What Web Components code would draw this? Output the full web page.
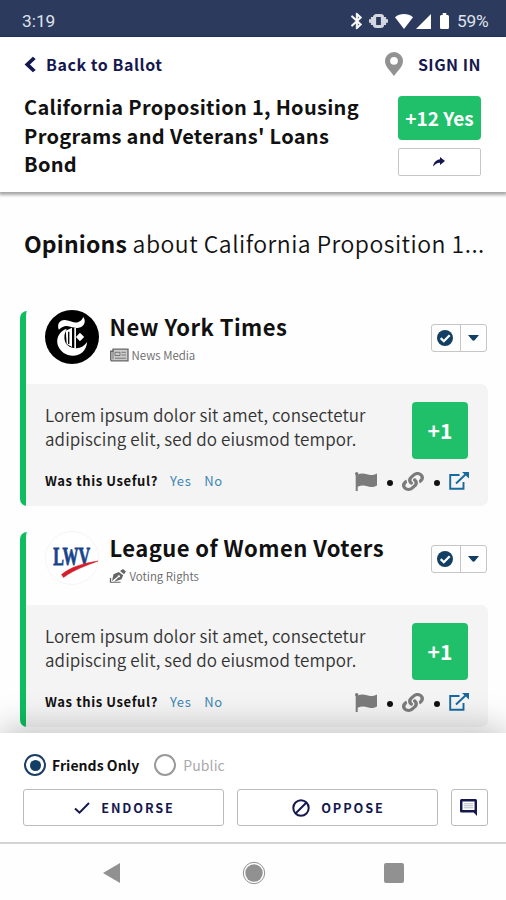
<!DOCTYPE html>
<html lang="en">
<head>
<meta charset="utf-8">
<meta name="viewport" content="width=device-width, initial-scale=1">
<title>Opinions</title>
<style>
  html, body {
    margin: 0;
    height: 100%;
    overflow: hidden;
  }

  body {
    font-family: "Noto Sans CJK SC", "Noto Sans", sans-serif;
    color: #111;
    background: #fefefe;
    --navy: #15184f;
    --blue: #123f63;
    --green: #20c06a;
    --line: #c6c6c6;
    --gray: #7b7b7b;
  }
</style>
</head>
<body>
<ballot-app>
  <status-bar slot="status" time="3:19" battery="59%"></status-bar>
  <ballot-header slot="header" score="+12 Yes">
    <span slot="back">Back to Ballot</span>
    <span slot="account">SIGN IN</span>
    California Proposition 1, Housing Programs and Veterans' Loans Bond
  </ballot-header>

  <opinions-heading><b>Opinions</b> about California Proposition 1...</opinions-heading>

  <opinion-card score="+1" icon="newspaper" style="--icon-w: 19px; --tag-gap: 3px">
    <app-icon slot="avatar" name="times"></app-icon>
    <span slot="name">New York Times</span>
    <span slot="category">News Media</span>
    Lorem ipsum dolor sit amet, consectetur adipiscing elit, sed do eiusmod tempor.
  </opinion-card>

  <opinion-card score="+1" icon="pen" style="--icon-w: 16px; --tag-gap: 4px">
    <app-icon slot="avatar" name="lwv"></app-icon>
    <span slot="name">League of Women Voters</span>
    <span slot="category">Voting Rights</span>
    Lorem ipsum dolor sit amet, consectetur adipiscing elit, sed do eiusmod tempor.
  </opinion-card>

  <vote-panel slot="footer"></vote-panel>
  <nav-bar slot="footer"></nav-bar>
</ballot-app>

<script>
const ICONS = {
  bluetooth: ['5 2 14 20', '<path d="M17.71 7.71 12 2h-1v7.59L6.41 5 5 6.41 10.59 12 5 17.59 6.41 19 11 14.41V22h1l5.71-5.71-4.3-4.29 4.3-4.29zM13 5.83l1.88 1.88L13 9.59V5.83zm1.88 10.46L13 18.17v-3.76l1.88 1.88z" stroke="currentColor" stroke-width=".6"/>'],
  vibrate: ['0 0 20 16', '<rect x="5.8" y="1.8" width="8.4" height="12.4" rx="2" fill="none" stroke="currentColor" stroke-width="3.4"/><path d="M0 6h2v4H0zM2 3.500h2.500v9H2zM15.500 3.500H18v9h-2.500zM18 6h2v4h-2z"/>'],
  wifi: ['0 0 20 16', '<path d="M10 16 0 3.500C5.500-1.200 14.500-1.200 20 3.500z"/>'],
  signal: ['0 0 16 16', '<path d="M16 0v16H0z"/>'],
  battery: ['0 0 10 16', '<path d="M3 0h4v2h1.500Q10 2 10 3.500v11Q10 16 8.500 16h-7Q0 16 0 14.500v-11Q0 2 1.500 2H3z"/>'],
  back: ['0 0 12 18', '<path d="M9.500 2 3 9l6.500 7" fill="none" stroke="currentColor" stroke-width="3.600"/>'],
  pin: ['0 0 18 24', '<path fill-rule="evenodd" d="M9 0a9 9 0 0 1 9 9c0 5.500-5 9.500-9 15C5 18.500 0 14.500 0 9a9 9 0 0 1 9-9zm0 4.900a3.900 3.900 0 1 0 0 7.800 3.900 3.900 0 0 0 0-7.800z"/>'],
  share: ['0 0 12 10', '<path d="M7 0l5 4-5 4V5.700C4 5.700 2.200 7 .2 9.500.4 5.500 3.500 2.700 7 2.300z"/>'],
  check: ['0 0 16 12', '<path d="m1 6.500 4.500 4.200L15 1" fill="none" stroke="currentColor" stroke-width="2"/>'],
  badge: ['0 0 16 16', '<circle cx="8" cy="8" r="8"/><path d="m3.700 8.100 3.100 3.100 5.900-6" fill="none" stroke="#fff" stroke-width="2.300"/>'],
  caret: ['0 0 12 6', '<path d="M0 0h12L7.500 5q-1.500 1.500-3 0z"/>'],
  newspaper: ['0 0 19 13', '<path d="M3 1h15v11H2.200Q.7 12 .7 10.500V3H3z" fill="#ccc" stroke="currentColor" stroke-width="1.300"/><path d="M3 2v8.500M5 4h5v3H5zM11.500 4H16M11.500 6.500H16M5 9.500h11" fill="none" stroke="currentColor" stroke-width=".8"/>'],
  pen: ['0 0 16 17', '<path d="M10 2.500 13 0l3 3-2 3.500zM8.700 3.500l4.500 4-1.700 5L4 15.500l4.500-5.500a1.200 1.200 0 1 0-.8-.8L2 14.500l1.500-8z"/><path d="M.5 11v5h10" fill="none" stroke="currentColor" stroke-width="1.300"/>'],
  flag: ['0 0 22 19', '<circle cx="1.700" cy="1.700" r="1.700"/><path d="M.7 1h2v18h-2zM2.700 2.500c3-1.500 6.300-1.300 9.300-.2 3.200 1.200 6 1 10-.8v12c-3.500 1.700-6.500 2-9.700.8-3.300-1.200-6.600-.9-9.600.5z"/>'],
  link: ['0 0 512 512', '<path d="M326.612 185.391c59.747 59.809 58.927 155.698.36 214.59-.11.12-.24.25-.36.37l-67.200 67.200c-59.270 59.270-155.699 59.262-214.960 0-59.270-59.260-59.270-155.700 0-214.960l37.106-37.106c9.840-9.840 26.786-3.300 27.294 10.606.648 17.722 3.826 35.527 9.690 52.721 1.986 5.822.567 12.262-3.783 16.612l-13.087 13.087c-28.026 28.026-28.905 73.660-1.155 101.960 28.024 28.579 74.086 28.749 102.325.51l67.200-67.190c28.191-28.191 28.073-73.757 0-101.830-3.701-3.694-7.429-6.564-10.341-8.569a16.037 16.037 0 0 1-6.947-12.606c-.396-10.567 3.348-21.456 11.698-29.806l21.054-21.055c5.521-5.521 14.182-6.199 20.584-1.731a152.482 152.482 0 0 1 20.522 17.197zM467.547 44.449c-59.261-59.262-155.690-59.270-214.960 0l-67.200 67.200c-.12.12-.25.25-.36.37-58.566 58.892-59.387 154.781.36 214.590a152.454 152.454 0 0 0 20.521 17.196c6.402 4.468 15.064 3.789 20.584-1.731l21.054-21.055c8.350-8.350 12.094-19.239 11.698-29.806a16.037 16.037 0 0 0-6.947-12.606c-2.912-2.005-6.640-4.875-10.341-8.569-28.073-28.073-28.191-73.639 0-101.830l67.200-67.190c28.239-28.239 74.300-28.069 102.325.51 27.750 28.300 26.872 73.934-1.155 101.960l-13.087 13.087c-4.350 4.350-5.769 10.790-3.783 16.612 5.864 17.194 9.042 34.999 9.690 52.721.509 13.906 17.454 20.446 27.294 10.606l37.106-37.106c59.271-59.259 59.271-155.699.001-214.959z"/>'],
  open: ['0 0 20 18', '<path d="M10.500 3H1.200v13.800h13.300V10M7 11.500 17 2" fill="none" stroke="currentColor" stroke-width="1.900"/><path d="M13 0h7v6.500z"/>'],
  forbid: ['0 0 18 18', '<g fill="none" stroke="currentColor" stroke-width="2"><circle cx="9" cy="9" r="7.700"/><path d="m3.500 14.500 11-11"/></g>'],
  comment: ['0 0 18 17', '<path fill-rule="evenodd" d="M1.500 0h15Q18 0 18 1.500V17l-3.500-3.500h-13Q0 13.500 0 12V1.500Q0 0 1.500 0zM2.600 2.600v8.300h12.800V2.600z"/><path d="M4 4.800h10M4 6.800h10M4 8.800h10" stroke="currentColor" stroke-width=".8" opacity=".4"/>'],
  navback: ['0 0 17 20', '<path d="M17 0v20L0 10z"/>'],
  home: ['0 0 24 24', '<circle cx="12" cy="12" r="8.700"/><circle cx="12" cy="12" r="10.700" fill="none" stroke="currentColor" stroke-width="1"/>'],
  recents: ['0 0 20 20', '<rect width="20" height="20" rx="2"/>'],
  times: ['0 0 164 164', `
    <circle cx="82" cy="82" r="82" fill="#000"/>
    <g fill="#fff">
      <path d="M42 60C35 42 46 28 64 31c14 2 24 9 36 6 9-3 13-9 16-16 10 12 4 29-14 33-14 3-30-7-42-5-7 1-12 5-18 11z"/>
      <path d="M66 57C44 64 34 84 38 104c6 22 26 35 47 35 22 0 41-16 43-42-8 12-19 18-32 19-20 1-36-10-37-30-1-12 3-20 7-29z"/>
      <path d="M63 63 82 54v58L66 103z"/>
      <path d="M89 54h5v65h-5z"/>
      <path d="m94 82 12-13 13 13-13 13z"/>
    </g>
    <path d="M72 66v37" stroke="#000" stroke-width="4"/>`],
  lwv: ['0 0 54 54', `
    <circle cx="27" cy="27" r="26.500" fill="#fff" stroke="#f5f5f5"/>
    <text x="13" y="34.500" transform="scale(.64 1)" font-family="Liberation Serif, serif" font-weight="700" font-size="25" fill="#16458c" stroke="#16458c" stroke-width=".8">LWV</text>
    <path d="M16.500 43.500C26 36 37 32.500 53 30 42 34.500 30 38 18.500 46.500z" fill="#d31f2b" stroke="#d31f2b" stroke-width=".5"/>`]
};

// Inline SVG picked by name, sized by the host box
class AppIcon extends HTMLElement {
  constructor() {
    super();
    this.attachShadow({ mode: 'open' });
  }

  connectedCallback() {
    const [viewBox, shape] = ICONS[this.getAttribute('name')];
    this.shadowRoot.innerHTML = `
      <style>
        :host { display: block; flex: none; }
        svg { display: block; width: 100%; height: 100%; fill: currentColor; overflow: visible; }
      </style>
      <svg viewBox="${viewBox}" preserveAspectRatio="none">${shape}</svg>
    `;
  }
}

class BallotApp extends HTMLElement {
  constructor() {
    super();
    this.attachShadow({ mode: 'open' });
  }

  connectedCallback() {
    this.shadowRoot.innerHTML = `
      <style>
        :host {
          display: flex;
          flex-direction: column;
          height: 900px;
          overflow: hidden;
        }

        main {
          flex: 1;
          min-height: 0;
          overflow: hidden;
          padding: 34px 18px 0 20px;
        }

        footer { flex: none; }
      </style>
      <slot name="status"></slot>
      <slot name="header"></slot>
      <main><slot></slot></main>
      <footer><slot name="footer"></slot></footer>
    `;
  }
}

class StatusBar extends HTMLElement {
  constructor() {
    super();
    this.attachShadow({ mode: 'open' });
  }

  connectedCallback() {
    this.shadowRoot.innerHTML = `
      <style>
        :host {
          display: flex;
          align-items: center;
          box-sizing: border-box;
          flex: none;
          height: 37px;
          padding: 6px 15px 0 22px;
          background: #2c3a5d;
          border-bottom: 1px solid #253463;
          color: #fff;
          font: 17.3px/20px Roboto, sans-serif;
        }

        .time { flex: 1; color: #dfe2ea; }
        .level { width: 34px; color: #dfe2ea; margin-left: 8px; letter-spacing: -.2px; }
      </style>
      <span class="time">${this.getAttribute('time')}</span>
      <app-icon name="bluetooth" style="width:12px;height:16px"></app-icon>
      <app-icon name="vibrate" style="width:19px;height:14px;margin-left:6px;color:#d3d7df"></app-icon>
      <app-icon name="wifi" style="width:18px;height:15px;margin-left:7px"></app-icon>
      <app-icon name="signal" style="width:15px;height:15px;margin-left:3px"></app-icon>
      <app-icon name="battery" style="width:9px;height:16px;margin-left:9px"></app-icon>
      <span class="level">${this.getAttribute('battery')}</span>
    `;
  }
}

class BallotHeader extends HTMLElement {
  constructor() {
    super();
    this.attachShadow({ mode: 'open' });
  }

  connectedCallback() {
    this.shadowRoot.innerHTML = `
      <style>
        :host {
          display: block;
          position: relative;
          box-sizing: border-box;
          flex: none;
          height: 155px;
          padding: 15px 25px 0 24px;
          background: #fff;
          box-shadow: 0 2px 3px 1px rgba(0, 0, 0, .35);
        }

        .top {
          display: flex;
          align-items: center;
          height: 24px;
          color: var(--navy);
          font-size: 16px;
          font-weight: 700;
          line-height: 24px;
        }

        .back { flex: 1; margin-left: 9px; letter-spacing: .55px; }
        .account { margin-left: 15px; letter-spacing: .5px; }

        .main {
          display: flex;
          justify-content: space-between;
          margin-top: 17px;
        }

        h1 {
          margin: 0;
          width: 350px;
          font-size: 20px;
          font-weight: 700;
          line-height: 28.5px;
          letter-spacing: .3px;
        }

        .side {
          display: flex;
          flex-direction: column;
          gap: 8px;
          padding-top: 3px;
          width: 83px;
        }

        .score {
          height: 44px;
          border-radius: 4px;
          background: var(--green);
          color: #fff;
          font-size: 19px;
          font-weight: 700;
          line-height: 43px;
          text-align: center;
          white-space: nowrap;
        }

        .share {
          display: grid;
          place-items: center;
          box-sizing: border-box;
          height: 28px;
          padding-right: 2px;
          border: 1px solid var(--line);
          border-radius: 2px;
          color: var(--navy);
        }
      </style>
      <div class="top">
        <app-icon name="back" style="width:13px;height:17px"></app-icon>
        <span class="back"><slot name="back"></slot></span>
        <app-icon name="pin" style="width:18px;height:24px;color:#929292"></app-icon>
        <span class="account"><slot name="account"></slot></span>
      </div>
      <div class="main">
        <h1><slot></slot></h1>
        <div class="side">
          <div class="score">${this.getAttribute('score')}</div>
          <div class="share"><app-icon name="share" style="width:12px;height:10px"></app-icon></div>
        </div>
      </div>
    `;
  }
}

class OpinionsHeading extends HTMLElement {
  constructor() {
    super();
    this.attachShadow({ mode: 'open' });
  }

  connectedCallback() {
    this.shadowRoot.innerHTML = `
      <style>
        :host {
          display: block;
          height: 34px;
          margin: 0 0 51px 4px;
          font-size: 23px;
          font-weight: 350;
          line-height: 34px;
          letter-spacing: .48px;
          white-space: nowrap;
        }

        ::slotted(b) { font-weight: 700; letter-spacing: .15px; }
      </style>
      <slot></slot>
    `;
  }
}

class OpinionCard extends HTMLElement {
  constructor() {
    super();
    this.attachShadow({ mode: 'open' });
  }

  connectedCallback() {
    this.shadowRoot.innerHTML = `
      <style>
        :host {
          display: block;
          box-sizing: border-box;
          height: 195px;
          margin-bottom: 26px;
          border-left: 6px solid #0dbd60;
          border-radius: 7px;
        }

        .head {
          display: flex;
          height: 73px;
          padding: 0 1px 0 19px;
        }

        ::slotted(app-icon) { width: 54px; height: 54px; margin-top: -1px; }

        .who { flex: 1; margin: -1px 0 0 10.5px; }

        .name {
          font-size: 22px;
          font-weight: 700;
          line-height: 32px;
          letter-spacing: .44px;
          white-space: nowrap;
        }

        .category {
          display: flex;
          align-items: center;
          gap: var(--tag-gap);
          height: 16px;
          margin-top: 5px;
          color: #666;
          font-size: 11.5px;
          font-weight: 350;
          line-height: 16px;
        }

        .toggle {
          display: grid;
          grid-template-columns: 28px 1fr;
          box-sizing: border-box;
          width: 56px;
          height: 28px;
          margin-top: 13px;
          border: 1px solid var(--line);
          border-radius: 3px;
          color: var(--blue);
        }

        .toggle div { display: grid; place-items: center; padding-right: 2px; }
        .toggle div + div { padding-right: 1px; border-left: 1px solid var(--line); }

        .body {
          box-sizing: border-box;
          height: 122px;
          padding: 18px 20px 0 19px;
          border-radius: 0 7px 7px 0;
          background: #f4f4f4;
        }

        .row { display: flex; justify-content: space-between; }

        p {
          margin: 1px 0 0;
          width: 340px;
          height: 56px;
          color: #333;
          font-size: 17px;
          font-weight: 350;
          line-height: 24px;
          letter-spacing: .1px;
        }

        .score {
          width: 56px;
          height: 57px;
          border-radius: 4px;
          background: var(--green);
          color: #fff;
          font-size: 21px;
          font-weight: 700;
          line-height: 57px;
          text-align: center;
        }

        .foot {
          display: flex;
          align-items: center;
          height: 20px;
          margin: 12px -1px 0 0;
          color: var(--gray);
          font-size: 13px;
          line-height: 20px;
        }

        .foot b { margin-right: 12px; color: #111; font-weight: 700; letter-spacing: .6px; }
        .foot a { margin-right: 13px; color: #3d86b5; letter-spacing: .6px; }
        .spacer { flex: 1; }
        i { width: 6px; height: 6px; margin: 3px 9.5px 0; border-radius: 50%; background: #111; }
      </style>
      <div class="head">
        <slot name="avatar"></slot>
        <div class="who">
          <div class="name"><slot name="name"></slot></div>
          <div class="category">
            <app-icon name="${this.getAttribute('icon')}" style="width:var(--icon-w);height:14px"></app-icon>
            <slot name="category"></slot>
          </div>
        </div>
        <div class="toggle">
          <div><app-icon name="badge" style="width:16px;height:16px"></app-icon></div>
          <div><app-icon name="caret" style="width:11px;height:6px"></app-icon></div>
        </div>
      </div>
      <div class="body">
        <div class="row">
          <p><slot></slot></p>
          <div class="score">${this.getAttribute('score')}</div>
        </div>
        <div class="foot">
          <b>Was this Useful?</b>
          <a>Yes</a>
          <a>No</a>
          <span class="spacer"></span>
          <app-icon name="flag" style="width:22px;height:19px"></app-icon>
          <i></i>
          <app-icon name="link" style="width:22px;height:19px"></app-icon>
          <i></i>
          <app-icon name="open" style="width:20px;height:18px;color:#1769a0"></app-icon>
        </div>
      </div>
    `;
  }
}

class VotePanel extends HTMLElement {
  constructor() {
    super();
    this.attachShadow({ mode: 'open' });
  }

  connectedCallback() {
    this.shadowRoot.innerHTML = `
      <style>
        :host {
          display: block;
          position: relative;
          box-sizing: border-box;
          height: 111px;
          padding: 20px 19px 0 23px;
          border-bottom: 2px solid #d4d4d4;
          background: #fff;
          box-shadow: 0 -4px 32px rgba(0, 0, 0, .25);
        }

        .audience {
          display: flex;
          align-items: center;
          height: 24px;
          padding-left: 1px;
          font-size: 14px;
          line-height: 24px;
        }

        .audience b { margin: 0 15px 0 6px; font-weight: 700; letter-spacing: .05px; }
        .audience span { margin-left: 7px; color: #aaa; letter-spacing: .1px; }

        .radio {
          display: grid;
          place-items: center;
          box-sizing: border-box;
          width: 22px;
          height: 22px;
          border: 2px solid #999;
          border-radius: 50%;
        }

        .radio.on { border-color: #1c3d66; }
        .radio.on::before {
          content: "";
          width: 11px;
          height: 11px;
          border-radius: 50%;
          background: var(--blue);
        }

        .actions {
          display: grid;
          grid-template-columns: 201px 201px 37px;
          gap: 13px;
          height: 37px;
          margin-top: 12px;
        }

        button {
          display: flex;
          align-items: center;
          justify-content: center;
          gap: 11px;
          padding: 0 0 0 2px;
          border: 1px solid #bbb;
          border-radius: 3px;
          background: #fff;
          color: var(--navy);
          font: 700 12.7px/20px "Noto Sans CJK SC", sans-serif;
          letter-spacing: 1.9px;
        }

        button:last-child { padding: 0 2px 0 0; }
      </style>
      <div class="audience">
        <div class="radio on"></div><b>Friends Only</b>
        <div class="radio"></div><span>Public</span>
      </div>
      <div class="actions">
        <button><app-icon name="check" style="width:16px;height:12px"></app-icon>ENDORSE</button>
        <button><app-icon name="forbid" style="width:18px;height:18px"></app-icon>OPPOSE</button>
        <button><app-icon name="comment" style="width:17px;height:17px"></app-icon></button>
      </div>
    `;
  }
}

class NavBar extends HTMLElement {
  constructor() {
    super();
    this.attachShadow({ mode: 'open' });
  }

  connectedCallback() {
    this.shadowRoot.innerHTML = `
      <style>
        :host {
          display: grid;
          grid-template-columns: 1fr 24px 1fr;
          align-items: center;
          position: relative;
          box-sizing: border-box;
          height: 56px;
          padding: 2px 102px 0 103px;
          background: #fefefe;
          color: #919191;
        }

        app-icon:last-child { justify-self: end; }
      </style>
      <app-icon name="navback" style="width:17px;height:20px"></app-icon>
      <app-icon name="home" style="width:24px;height:24px"></app-icon>
      <app-icon name="recents" style="width:20px;height:20px"></app-icon>
    `;
  }
}

customElements.define('app-icon', AppIcon);
customElements.define('ballot-app', BallotApp);
customElements.define('status-bar', StatusBar);
customElements.define('ballot-header', BallotHeader);
customElements.define('opinions-heading', OpinionsHeading);
customElements.define('opinion-card', OpinionCard);
customElements.define('vote-panel', VotePanel);
customElements.define('nav-bar', NavBar);
</script>
</body>
</html>
